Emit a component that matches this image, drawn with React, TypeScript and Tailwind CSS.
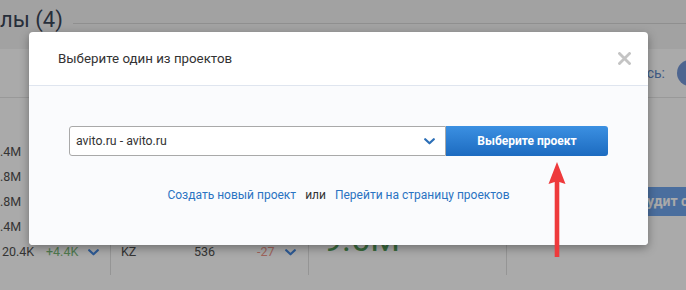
import React from "react";

function Chevron({ className }: { className?: string }) {
  return (
    <svg className={className} width="11" height="7" viewBox="0 0 11 7" fill="none">
      <path d="M1.2 1.2 L5.5 5.3 L9.8 1.2" stroke="currentColor" strokeWidth="2.2" strokeLinecap="round" strokeLinejoin="round" />
    </svg>
  );
}

export default function App() {
  return (
    <div
      className="relative w-[686px] h-[290px] overflow-hidden bg-white"
      style={{ fontFamily: "Roboto, 'Liberation Sans', Arial, sans-serif" }}
    >
      {/* underlying page */}
      <div className="flex flex-col">
        <div className="h-[49px] bg-[#f4f4f4] flex items-start">
          <div className="pt-[5px] text-[22px] leading-[30px] text-[#3a4658] shrink-0">лы (4)</div>
          <div className="flex-1 h-px bg-[#d7d7d7] mt-[23px] ml-[10px]" />
        </div>
        <div className="h-[49px] border-b border-[#e6e6e6] flex items-center justify-end">
          <span className="text-[14px] text-[#5d87c7] mr-[12px]">Поделитесь:</span>
          <div className="w-[26px] h-[26px] rounded-full bg-[#7498d8] mr-[-17px] shrink-0" />
        </div>
        <div className="flex h-[177px]">
          <div className="w-[111px] shrink-0 border-r border-[#e0e0e0] flex flex-col justify-end pb-[10px] text-[12.5px] text-[#505050]">
            <div className="h-[25px] flex items-center">.4M</div>
            <div className="h-[25px] flex items-center">.8M</div>
            <div className="h-[25px] flex items-center">.8M</div>
            <div className="h-[25px] flex items-center">.4M</div>
            <div className="h-[25px] flex items-center pl-[2px]">
              <span className="w-[44px]">20.4K</span>
              <span className="w-[42px] text-[#78b878]">+4.4K</span>
              <Chevron className="text-[#4488e0]" />
            </div>
          </div>
          <div className="w-[198px] shrink-0 border-r border-[#e0e0e0] flex flex-col justify-end pb-[10px] text-[12.5px] text-[#505050]">
            <div className="h-[25px] flex items-center pl-[10px]">
              <span className="w-[73px]">KZ</span>
              <span className="w-[63px]">536</span>
              <span className="w-[28px] text-[#f0968a]">-27</span>
              <Chevron className="text-[#4488e0]" />
            </div>
          </div>
          <div className="w-[198px] shrink-0 border-r border-[#e0e0e0] flex flex-col justify-end pb-[19px] pl-[14px]">
            <div className="text-[34px] leading-[34px] text-[#56a05c]">9.6M</div>
          </div>
          <div className="flex-1 min-w-0 flex flex-col pt-[89px] pl-[69px]">
            <div className="h-[29px] w-[160px] shrink-0 rounded-[3px] bg-[#6fa5ed] text-white text-[14px] font-bold flex items-center pl-[62px] whitespace-nowrap">
              Аудит сайта
            </div>
          </div>
        </div>
      </div>

      {/* overlay */}
      <div className="absolute inset-0 bg-black/[0.335]" />

      {/* modal */}
      <div className="absolute left-[29px] top-[32px] w-[619px] rounded-[4px] overflow-hidden bg-white shadow-[0_3px_10px_rgba(0,0,0,0.35)]">
        <div className="h-[54px] border-b border-[#dfe5ef] flex items-center justify-between pl-[29px] pr-[17px]">
          <span className="text-[13.3px] text-[#333]">Выберите один из проектов</span>
          <svg width="13" height="13" viewBox="0 0 13 13">
            <path d="M1.5 1.5 L11.5 11.5 M11.5 1.5 L1.5 11.5" stroke="#c4c4c4" strokeWidth="2.8" strokeLinecap="square" />
          </svg>
        </div>
        <div className="h-[159px] bg-[#fafbfd] px-[40px] pt-[40px] flex flex-col">
          <div className="flex h-[30px]">
            <div className="flex-1 bg-white border border-[#a9a9a9] rounded-l-[3px] flex items-center justify-between pl-[6px] pr-[10px]">
              <span className="text-[12.3px] text-[#333]">avito.ru - avito.ru</span>
              <Chevron className="text-[#2c6fb7]" />
            </div>
            <div className="w-[162px] rounded-r-[3px] bg-gradient-to-b from-[#3b90e2] to-[#1c6bc0] text-white text-[12px] font-bold flex items-center justify-center">
              Выберите проект
            </div>
          </div>
          <div className="mt-[30px] flex justify-center items-center gap-[9px] text-[12px]">
            <span className="text-[#2a73c2]">Создать новый проект</span>
            <span className="text-[#333]">или</span>
            <span className="text-[#2a73c2]">Перейти на страницу проектов</span>
          </div>
        </div>
      </div>

      {/* red arrow */}
      <svg className="absolute left-[546px] top-[161px]" width="22" height="98" viewBox="0 0 22 98">
        <path d="M11 1 L19.5 23 L13.3 21 L13.3 96 L8.7 96 L8.7 21 L2.5 23 Z" fill="#ee3a3c" />
      </svg>
    </div>
  );
}
